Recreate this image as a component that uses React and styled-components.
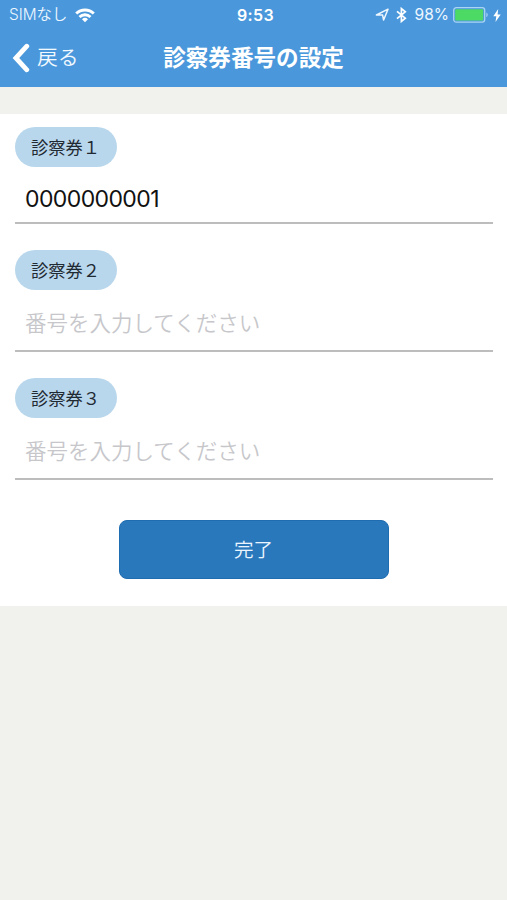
import React, { useState } from 'react';
import styled, { createGlobalStyle } from 'styled-components';

const GlobalStyle = createGlobalStyle`
  * {
    box-sizing: border-box;
  }

  body {
    margin: 0;
    background-color: #f1f2ee;
    font-family: Inter, "Noto Sans CJK JP", sans-serif;
  }
`;

const Screen = styled.div`
  width: 100%;
  min-height: 900px;
  background-color: #f1f2ee;
`;

const Header = styled.header`
  height: 87px;
  background-color: #4a98db;
  color: white;
`;

const StatusBar = styled.div`
  display: grid;
  grid-template-columns: 1fr auto 1fr;
  align-items: center;
  height: 30px;
  padding: 0 6px 0 9px;
  line-height: 30px;
`;

const Carrier = styled.div`
  display: flex;
  align-items: center;
  gap: 8px;
  font-size: 15.4px;
  font-weight: 350;
  color: #eef7ff;
`;

const Clock = styled.div`
  padding-left: 1px;
  font-size: 16px;
  font-weight: 600;
  letter-spacing: 0.4px;
`;

const Indicators = styled.div`
  display: flex;
  align-items: center;
  justify-content: flex-end;
`;

const Percent = styled.span`
  margin: 0 4px 0 8px;
  font-size: 15.5px;
  color: #eef7ff;
`;

const NavBar = styled.nav`
  display: grid;
  grid-template-columns: 1fr auto 1fr;
  align-items: center;
  height: 55px;
  padding-left: 11px;
`;

const BackButton = styled.button`
  display: flex;
  align-items: center;
  gap: 6px;
  padding: 0;
  border: none;
  background: none;
  color: #f2f9ff;
  font-family: inherit;
  font-size: 20.8px;
  font-weight: 350;
  line-height: 30px;
`;

const Title = styled.h1`
  margin: 0 11px 0 0;
  font-size: 22.6px;
  font-weight: 700;
  line-height: 30px;
`;

const Form = styled.form`
  display: flex;
  flex-direction: column;
  height: 492px;
  margin-top: 27px;
  padding: 13px 14px 0 15px;
  background-color: white;
`;

const Field = styled.div`
  height: ${({ $height }) => $height}px;
  margin-bottom: 26px;
  border-bottom: 2px solid #bdbdbe;
`;

const Label = styled.label`
  display: flex;
  align-items: center;
  width: 102px;
  height: 39.5px;
  padding-left: 16px;
  border-radius: 20px;
  background-color: #b9d7ec;
  color: #1f2a33;
  font-family: "Noto Sans CJK JP", sans-serif;
  font-size: 17.3px;
  line-height: 39px;
`;

const Input = styled.input`
  display: block;
  width: 100%;
  height: ${({ $height }) => $height}px;
  padding: ${({ value }) => (value ? '9px 11px 0 10px' : '6px 11px 0 10px')};
  border: none;
  outline: none;
  background: none;
  color: #111;
  font-family: inherit;
  font-size: 23px;
  letter-spacing: -0.6px;

  &::placeholder {
    color: #c7c7cb;
    font-size: 21.5px;
    font-weight: 350;
    letter-spacing: 0;
    opacity: 1;
  }
`;

const SubmitButton = styled.button`
  align-self: center;
  width: 270px;
  height: 59px;
  margin-top: 14px;
  padding: 0 1px 2px 0;
  border: 1px solid #1f6cb0;
  border-radius: 8px;
  background-color: #2a78bc;
  color: #eaf5ff;
  font-family: inherit;
  font-size: 19.6px;
  font-weight: 350;
`;

const WifiIcon = () => (
  <svg width="20" height="15" viewBox="0 0 20 15" fill="none" stroke="white" strokeWidth="2.8">
    <path d="M1.2 5.6a12.5 12.5 0 0 1 17.6 0" />
    <path d="M4.5 9a7.8 7.8 0 0 1 11 0" />
    <path d="M10 14.2 7 11.2a4.3 4.3 0 0 1 6 0z" fill="white" stroke="none" />
  </svg>
);

const LocationIcon = () => (
  <svg width="14" height="14" viewBox="0 0 14 14" fill="none" stroke="#eef7ff" strokeWidth="1.5" strokeLinejoin="round">
    <path d="M13 1.2 8.6 12 7.6 7.1 1.4 7z" />
  </svg>
);

const BluetoothGlyph = styled.svg`
  margin-left: 7px;
`;

const BluetoothIcon = () => (
  <BluetoothGlyph width="11" height="16" viewBox="0 0 11 16" fill="none" stroke="white" strokeWidth="1.7">
    <path d="M1 4.3 9.3 11.2 5.4 14.4V1.6l3.9 3.2L1 11.7" />
  </BluetoothGlyph>
);

const BatteryGlyph = styled.svg`
  margin-right: 4px;
`;

const BatteryIcon = () => (
  <BatteryGlyph width="36" height="16" viewBox="0 0 36 16">
    <rect x="0.7" y="0.7" width="31" height="14.4" rx="2.6" fill="none" stroke="#a9d4f3" strokeWidth="1.3" />
    <rect x="2.2" y="2.2" width="28" height="11.4" rx="1" fill="#4cd964" />
    <path d="M33.4 5.6c1.8.8 1.8 3.9 0 4.7z" fill="#a9d4f3" />
  </BatteryGlyph>
);

const BoltIcon = () => (
  <svg width="8" height="13" viewBox="0 0 8 13">
    <path d="M5.2 0 .3 7.3h3L2.5 13l5.2-7.6H4.6z" fill="white" />
  </svg>
);

const ChevronIcon = () => (
  <svg width="20" height="30" viewBox="0 0 20 30" fill="none" stroke="white" strokeWidth="4.8" strokeLinecap="round">
    <path d="M15.8 3.2 4.9 15l10.9 11.8" />
  </svg>
);

const cards = [
  { id: 'card1', label: '診察券１', value: '0000000001', height: 97 },
  { id: 'card2', label: '診察券２', value: '', height: 102 },
  { id: 'card3', label: '診察券３', value: '', height: 102 },
];

function App() {
  const [numbers, setNumbers] = useState(cards.map((card) => card.value));

  const handleChange = (index, value) => {
    setNumbers(numbers.map((number, i) => (i === index ? value : number)));
  };

  return (
    <>
      <GlobalStyle />
      <Screen>
        <Header>
          <StatusBar>
            <Carrier>
              <span>SIMなし</span>
              <WifiIcon />
            </Carrier>
            <Clock>9:53</Clock>
            <Indicators>
              <LocationIcon />
              <BluetoothIcon />
              <Percent>98%</Percent>
              <BatteryIcon />
              <BoltIcon />
            </Indicators>
          </StatusBar>
          <NavBar>
            <BackButton type="button">
              <ChevronIcon />
              戻る
            </BackButton>
            <Title>診察券番号の設定</Title>
          </NavBar>
        </Header>
        <Form onSubmit={(e) => e.preventDefault()}>
          {cards.map((card, index) => (
            <Field key={card.id} $height={card.height}>
              <Label htmlFor={card.id}>{card.label}</Label>
              <Input
                id={card.id}
                $height={card.height - 42}
                value={numbers[index]}
                placeholder="番号を入力してください"
                onChange={(e) => handleChange(index, e.target.value)}
              />
            </Field>
          ))}
          <SubmitButton type="submit">完了</SubmitButton>
        </Form>
      </Screen>
    </>
  );
}

export default App;
